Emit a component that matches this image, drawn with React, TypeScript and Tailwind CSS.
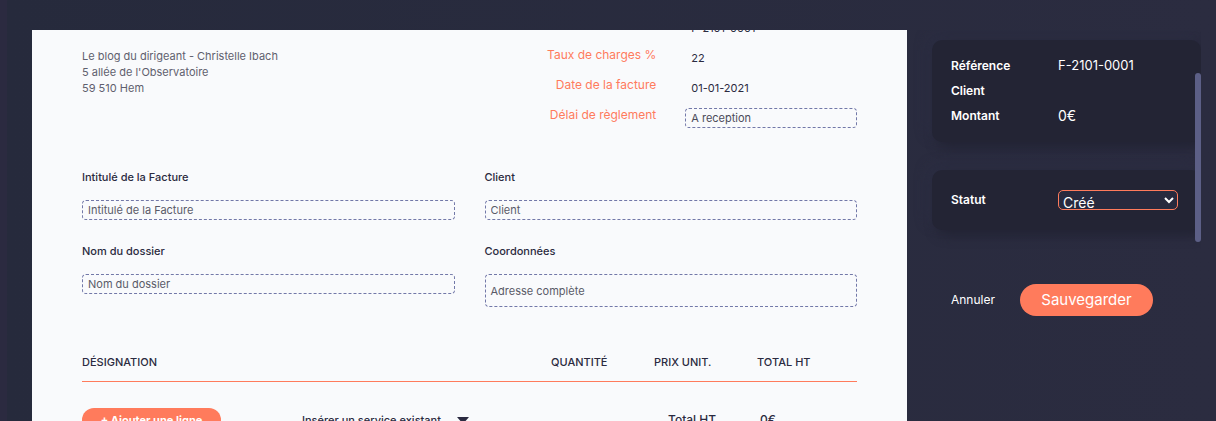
import {useState} from 'react';

const fieldClass =
  'w-full min-w-0 rounded-[4px] border border-dashed border-[#7278a8] bg-transparent px-[5px] text-[11px] text-[#4b4b5a] placeholder:text-[#5a5a68] placeholder:opacity-100 outline-none';

function Field({id, label}: {id: string; label: string}) {
  return (
    <div>
      <label htmlFor={id} className="block text-[11px] leading-4 font-medium">
        {label}
      </label>
      <input id={id} placeholder={label} className={`${fieldClass} mt-[15px] block h-5`} />
    </div>
  );
}

function InvoiceHeader() {
  return (
    <div className="grid grid-cols-2 gap-[30px]">
      <address className="pt-[30px] text-[11px] leading-4 text-[#5f5f6e] not-italic">
        Le blog du dirigeant - Christelle Ibach
        <br />
        5 allée de l'Observatoire
        <br />
        59 510 Hem
      </address>
      <div className="flex flex-col gap-[10px] text-[11px]">
        <div className="grid h-5 grid-cols-2 gap-[29px]">
          <span></span>
          <span className="pl-[6px] leading-5">F-2101-0001</span>
        </div>
        <div className="grid h-5 grid-cols-2 gap-[29px]">
          <span className="text-right text-[12px] leading-[14px] whitespace-nowrap text-[#ff7b5c]">
            Taux de charges %
          </span>
          <span className="pl-[6px] leading-5">22</span>
        </div>
        <div className="grid h-5 grid-cols-2 gap-[29px]">
          <span className="text-right text-[12px] leading-[14px] whitespace-nowrap text-[#ff7b5c]">
            Date de la facture
          </span>
          <span className="pl-[6px] leading-5">01-01-2021</span>
        </div>
        <div className="grid h-5 grid-cols-2 gap-[29px]">
          <label
            htmlFor="delai"
            className="text-right text-[12px] leading-[14px] whitespace-nowrap text-[#ff7b5c]"
          >
            Délai de règlement
          </label>
          <input id="delai" defaultValue="A reception" className={`${fieldClass} h-5`} />
        </div>
      </div>
    </div>
  );
}

function InvoiceSheet() {
  return (
    <main className="min-w-0 flex-1 overflow-hidden bg-[#f9fafc] px-[50px] text-[#2b2a40]">
      <div className="-mt-3">
        <InvoiceHeader />
        <div className="mt-[41px] grid grid-cols-2 gap-x-[30px] gap-y-[23px]">
          <Field id="intitule" label="Intitulé de la Facture" />
          <Field id="client" label="Client" />
          <Field id="dossier" label="Nom du dossier" />
          <div>
            <label htmlFor="adresse" className="block text-[11px] leading-4 font-medium">
              Coordonnées
            </label>
            <textarea
              id="adresse"
              rows={1}
              placeholder="Adresse complète"
              className={`${fieldClass} mt-[15px] block h-[33px] resize-none overflow-hidden py-2 leading-4`}
            />
          </div>
        </div>
        <table className="mt-[47px] w-full table-fixed text-left text-[11px] leading-4">
          <thead>
            <tr className="border-b border-[#ff7b5c]">
              <th className="pb-[11px] font-medium">DÉSIGNATION</th>
              <th className="w-[103px] pb-[11px] font-medium">QUANTITÉ</th>
              <th className="w-[103px] pb-[11px] font-medium">PRIX UNIT.</th>
              <th className="w-[100px] pb-[11px] font-medium">TOTAL HT</th>
            </tr>
          </thead>
        </table>
        <div className="mt-[26px] flex items-center text-[11px] font-medium">
          <button
            type="button"
            className="h-6 w-[139px] rounded-full bg-[#ff7b5c] text-[11px] font-bold text-white"
          >
            + Ajouter une ligne
          </button>
          <button type="button" className="ml-[81px] flex items-center gap-4">
            Insérer un service existant
            <svg width="12" height="7" viewBox="0 0 12 7" fill="currentColor">
              <path d="M0 0h12L6 7z" />
            </svg>
          </button>
          <span className="ml-auto w-[92px] text-[12px]">Total HT</span>
          <span className="w-[97px] text-[12px]">0€</span>
        </div>
      </div>
    </main>
  );
}

function Sidebar() {
  const [status, setStatus] = useState('cree');
  const cardClass =
    'rounded-[10px] bg-[#232434] px-[19px] shadow-[5px_5px_12px_#222333,-5px_-5px_12px_#2c2e43]';

  return (
    <aside className="relative w-[294px] shrink-0 overflow-hidden pt-[10px] pl-[25px] text-[12px] text-white">
      <dl
        className={`${cardClass} grid grid-cols-[107px_1fr] pt-[13px] pb-[14px] leading-[25px]`}
      >
        <dt className="font-semibold">Référence</dt>
        <dd className="text-[13px]">F-2101-0001</dd>
        <dt className="font-semibold">Client</dt>
        <dd></dd>
        <dt className="font-semibold">Montant</dt>
        <dd className="text-[14px]">0€</dd>
      </dl>
      <div className={`${cardClass} mt-7 flex items-center py-5`}>
        <label htmlFor="statut" className="w-[107px] font-semibold">
          Statut
        </label>
        <select
          id="statut"
          value={status}
          onChange={(e) => setStatus(e.target.value)}
          className="h-5 w-[120px] rounded-[5px] border border-[#ff7b5c] bg-[#282a3e] pt-[2px] text-[14px] text-white"
        >
          <option value="cree">Créé</option>
          <option value="envoye">Envoyé</option>
        </select>
      </div>
      <div className="mt-[54px] flex items-center gap-[25px] pl-[19px]">
        <button type="button">Annuler</button>
        <button
          type="button"
          className="h-8 w-[133px] rounded-full bg-[#ff7b5c] text-[15px] text-white"
        >
          Sauvegarder
        </button>
      </div>
      {/* scroll thumb */}
      <div className="absolute top-[43px] right-0 h-[169px] w-[6px] rounded-full bg-[#5c5f86]"></div>
    </aside>
  );
}

function App() {
  return (
    <div className="flex h-screen overflow-hidden border-l-[7px] border-[#2b2a40] bg-linear-to-r from-[#262a3c] to-[#2b2c40] pt-[30px] pr-[15px] pl-[25px] font-['Inter',sans-serif]">
      <InvoiceSheet />
      <Sidebar />
    </div>
  );
}

export default App;
